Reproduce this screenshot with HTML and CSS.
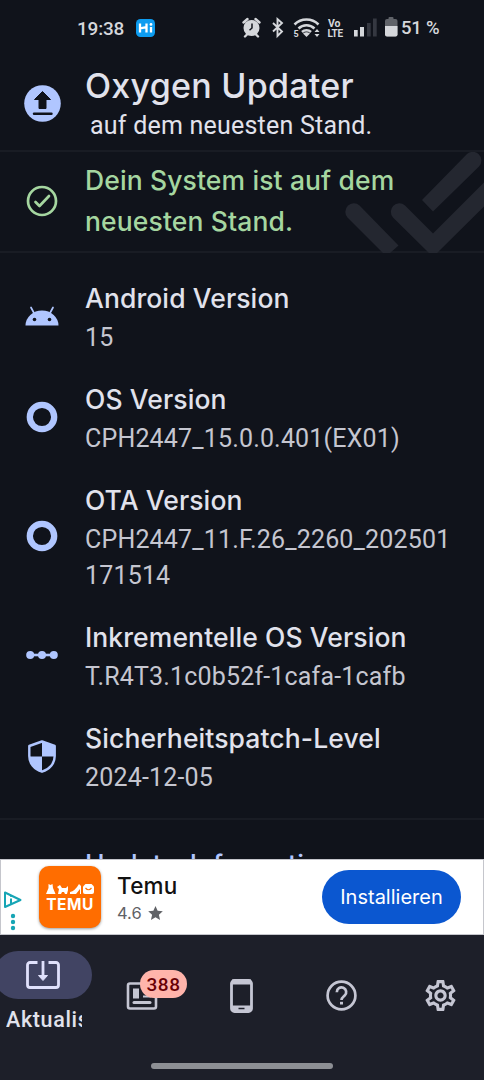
FILE: index.html
```html
<!DOCTYPE html>
<html lang="de">
<head>
<meta charset="utf-8">
<title>Oxygen Updater</title>
<link rel="stylesheet" href="styles.css">
</head>
<body>
<div class="screen">
  <div class="status">
    <span class="clock">19:38</span>
    <span class="hi"><svg width="19" height="18" viewBox="0 0 19 18"><rect width="19" height="18" rx="4.5" fill="#0d9cf0"/><path d="M4 4.5v9M10.500 4.500v9M4 9.300L10.500 8.200M15 8v5.500" stroke="#fff" stroke-width="2.300" fill="none"/><circle cx="15" cy="5.400" r="1.400" fill="#fff"/></svg></span>
    <svg class="sys" width="156" height="24" viewBox="242 16 156 24" fill="#d5d7db">
      <circle cx="251.500" cy="28" r="8"/><path d="M243.500 22.500l4-3.500M259.500 22.500l-4-3.500M247 34.500l-2 2M256 34.500l2 2" stroke="#d5d7db" stroke-width="2.400" stroke-linecap="round"/><path d="M252 23.500v4.500l-2.500 2.200" stroke="#10131b" stroke-width="1.500" fill="none"/>
      <path d="M273 23l9 8.500-4.500 4.500V19l4.500 4-9 8.500" fill="none" stroke="#d5d7db" stroke-width="1.900"/>
      <path d="M294.500 24.500a17 17 0 0 1 24 0M298.500 28.500a11.500 11.500 0 0 1 16 0M302 32a6.500 6.500 0 0 1 9 0" fill="none" stroke="#d5d7db" stroke-width="2.500"/><path d="M303 33.500q3.500-2.500 7 0l-3.500 3.500z"/><path d="M314.500 32l2.500-3 2.500 3zM314.500 34l2.500 3 2.500-3z"/>
      <text x="293.500" y="37" class="tiny">5</text>
      <text x="328" y="26.500" class="volte">Vo</text><text x="327.500" y="36.800" class="volte lte">LTE</text>
      <rect x="354" y="30" width="3.700" height="6.500"/><rect x="360" y="27" width="4" height="9.500"/><path d="M367 23h3.700v13.500H367zM373 18.500h3.700v18H373z" fill="#353841"/>
      <rect x="385" y="19" width="12.500" height="17.500" rx="2" fill="#606369"/><rect x="388.500" y="17" width="5" height="3" rx="1" fill="#606369"/><path d="M385 26h12.500v8.500a2 2 0 0 1-2 2H387a2 2 0 0 1-2-2z"/>
    </svg>
    <span class="battery">51 %</span>
  </div>

  <header class="row app">
    <svg width="37" height="37" viewBox="0 0 37 37"><circle cx="18.500" cy="18.500" r="18.300" fill="#b0c6ff"/><path d="M18.500 6.500L26.500 14.500h-4.500v9h-7v-9H10.500z" fill="#10131b" stroke="#10131b" stroke-width="1" stroke-linejoin="round"/><path d="M10 28.800h17.500" stroke="#10131b" stroke-width="2.400" stroke-linecap="round"/></svg>
    <div><h1>Oxygen Updater</h1><p class="tagline">auf dem neuesten Stand.</p></div>
  </header>

  <section class="row notice">
    <svg width="32" height="32" viewBox="0 0 32 32" fill="none" stroke="#a5d6a0" stroke-width="2.700"><circle cx="16" cy="16" r="14"/><path d="M9.500 17l4 4L23 11" stroke-linecap="round" stroke-linejoin="round"/></svg>
    <h2 class="green">Dein System ist auf dem<br>neuesten Stand.</h2>
    <svg class="watermark" width="142" height="101" viewBox="342 152 142 101" fill="#242730"><path d="M422 200l44.500-45.500a8.500 8.500 0 0 1 12.500 12L433 211.500z"/><path d="M347.500 217.500a8.500 8.500 0 0 1 12-12l39 40-9 8h-6z"/><path d="M393 217.500a8.500 8.500 0 0 1 12-12l28 28 51-51v24L437 253h-8z"/></svg>
  </section>

  <main class="list">
    <div class="row">
      <svg width="34" height="20" viewBox="0 0 34 20"><path d="M.5 19.500a16.500 15 0 0 1 33 0z" fill="#b0c6ff"/><path d="M9 7L6 1.500M25 7l3-5.500" stroke="#b0c6ff" stroke-width="1.700" stroke-linecap="round"/><circle cx="9.500" cy="13.500" r="1.800" fill="#10131b"/><circle cx="24.500" cy="13.500" r="1.800" fill="#10131b"/></svg>
      <div><h2>Android Version</h2><p>15</p></div>
    </div>
    <div class="row">
      <svg width="32" height="32" viewBox="0 0 32 32"><circle cx="16" cy="16" r="12.200" fill="none" stroke="#b0c6ff" stroke-width="6.300"/></svg>
      <div><h2>OS Version</h2><p>CPH2447_15.0.0.401(EX01)</p></div>
    </div>
    <div class="row">
      <svg width="32" height="32" viewBox="0 0 32 32"><circle cx="16" cy="16" r="12.200" fill="none" stroke="#b0c6ff" stroke-width="6.300"/></svg>
      <div><h2>OTA Version</h2><p>CPH2447_11.F.26_2260_202501<br>171514</p></div>
    </div>
    <div class="row">
      <svg width="32" height="8" viewBox="0 0 32 8" fill="#b0c6ff"><path d="M4 2.700h24v2.600H4z"/><circle cx="4.200" cy="4" r="4"/><circle cx="16" cy="4" r="4"/><circle cx="27.800" cy="4" r="4"/></svg>
      <div><h2>Inkrementelle OS Version</h2><p>T.R4T3.1c0b52f-1cafa-1cafb</p></div>
    </div>
    <div class="row">
      <svg width="28" height="33" viewBox="0 0 28 33"><path d="M14 1.500L26.700 6v10c0 7.500-5 13.500-12.700 15.700C6.300 29.500 1.300 23.500 1.300 16V6z" fill="#10131b" stroke="#b0c6ff" stroke-width="2.400" stroke-linejoin="round"/><path d="M14 1.500L26.700 6v10.500H14zM1.300 16.500H14v15.200C6.300 29.500 1.300 23.500 1.300 16.500z" fill="#b0c6ff"/></svg>
      <div><h2>Sicherheitspatch-Level</h2><p>2024-12-05</p></div>
    </div>
  </main>

  <section class="more"><h2>Update-Informationen</h2></section>

  <aside class="ad">
    <svg class="choices" width="20" height="42" viewBox="0 0 20 42"><path d="M2 3.500v14.500L17.500 11z" fill="none" stroke="#16a5b5" stroke-width="2" stroke-linejoin="round"/><path d="M8 9.500v5.500" stroke="#16a5b5" stroke-width="2"/><circle cx="8" cy="7" r="1.100" fill="#16a5b5"/><g fill="#16a5b5"><circle cx="10" cy="27" r="2.200"/><circle cx="10" cy="33" r="2.200"/><circle cx="10" cy="39" r="2.200"/></g></svg>
    <div class="temu">
      <svg width="48" height="11" viewBox="0 0 48 11" fill="#fff"><path d="M2.500 0l2 1 2-1 .5 4 2.500 6H0l2.500-6z"/><path d="M11 3l3-2 2 3h4l2-2v4l-1 4h-2l-1-2h-2l-1 2h-3l1-5z"/><path d="M24 8q5-1 9-8l2 2v8h-1V5l-4 5h-6z"/><path d="M37 2.500L39.500 0h6L48 2.500V8a2 2 0 0 1-2 2h-7a2 2 0 0 1-2-2z"/><path d="M39.500 4q3 3.500 6 0" fill="none" stroke="#ff6d00" stroke-width="1.200"/></svg>
      <span>TEMU</span>
    </div>
    <div class="adtext"><b>Temu</b><span class="rating">4.6 <svg width="15" height="14" viewBox="0 0 24 23"><path d="M12 0l3.500 8 8.500.8-6.400 5.700L19.500 23 12 18.500 4.500 23l1.900-8.500L0 8.800 8.500 8z" fill="#606266"/></svg></span></div>
    <span class="install">Installieren</span>
  </aside>

  <nav class="nav">
    <div class="tab active">
      <span class="pill"><svg width="34" height="28" viewBox="0 0 34 28" fill="none" stroke="#e0e1fc" stroke-width="2.800" stroke-linejoin="round"><path d="M11.500 1.500H4a2.500 2.500 0 0 0-2.500 2.500v20A2.500 2.500 0 0 0 4 26.500h26a2.500 2.500 0 0 0 2.500-2.500V4A2.500 2.500 0 0 0 30 1.500h-7.500M17 0v17"/><path d="M12.500 14.500h9L17 19.500z" fill="#e0e1fc" stroke-width="1"/></svg></span>
      <span class="label">Aktualisieren</span>
    </div>
    <div class="tab"><svg width="32" height="28" viewBox="0 0 32 28" fill="none" stroke="#c5c6d3" stroke-width="2.600"><rect x="2" y="1.500" width="28" height="25" rx="2"/><path d="M8 20.500h16" stroke-width="3" stroke-linecap="round"/><path d="M8 7.500h4v8H8zM17 9h8M17 14.500h8" fill="#c5c6d3" stroke-width="2"/></svg><span class="badge">388</span></div>
    <div class="tab"><svg width="23" height="34" viewBox="0 0 23 34"><rect x="1.500" y="1.500" width="20" height="31" rx="3" fill="none" stroke="#c5c6d3" stroke-width="2.800"/><path d="M2 3h19M2 29h19" stroke="#c5c6d3" stroke-width="5"/><path d="M8.500 29.500h6" stroke="#1d1f29" stroke-width="1.500"/></svg></div>
    <div class="tab"><svg width="31" height="31" viewBox="0 0 31 31" fill="none" stroke="#c5c6d3" stroke-width="2.700"><circle cx="15.500" cy="15.500" r="13.900"/><path d="M10.800 12.200a4.700 4.700 0 1 1 7.900 3.300c-1.900 1.700-3.200 2.400-3.200 4.600"/><path d="M14 21.800h3v2.700h-3z" fill="#c5c6d3" stroke="none"/></svg></div>
    <div class="tab"><svg width="37" height="37" viewBox="0 0 24 24" fill="#c5c6d3"><path d="M19.430 12.980c.04-.32.070-.64.070-.98s-.03-.66-.07-.98l2.110-1.650c.19-.15.240-.42.120-.64l-2-3.460c-.09-.16-.26-.25-.44-.25-.06 0-.12.010-.17.030l-2.490 1c-.52-.4-1.080-.73-1.690-.98l-.38-2.650C14.460 2.180 14.250 2 14 2h-4c-.25 0-.46.180-.49.420l-.38 2.650c-.61.250-1.170.590-1.690.98l-2.490-1c-.06-.02-.12-.03-.18-.03-.17 0-.34.090-.43.250l-2 3.460c-.13.220-.07.490.120.640l2.110 1.650c-.04.320-.07.650-.07.980s.030.660.070.980l-2.110 1.650c-.19.150-.24.420-.12.640l2 3.460c.09.160.260.250.440.250.06 0 .12-.01.170-.03l2.490-1c.52.400 1.080.730 1.690.980l.38 2.650c.03.240.240.420.490.420h4c.25 0 .46-.18.490-.42l.38-2.650c.61-.25 1.170-.59 1.690-.98l2.490 1c.06.020.12.030.18.030.17 0 .34-.09.430-.25l2-3.460c.12-.22.070-.49-.12-.64l-2.110-1.650zm-1.980-1.710c.04.310.050.520.050.730s-.02.430-.05.730l-.14 1.130.89.700 1.080.840-.7 1.210-1.270-.51-1.040-.42-.9.680c-.43.320-.84.560-1.250.730l-1.060.43-.16 1.130-.2 1.350h-1.400l-.19-1.350-.16-1.130-1.060-.43c-.43-.18-.83-.41-1.230-.71l-.91-.7-1.060.43-1.270.51-.7-1.210 1.080-.84.890-.7-.14-1.130c-.03-.31-.05-.54-.05-.74s.020-.43.050-.73l.14-1.130-.89-.7-1.080-.84.700-1.210 1.270.51 1.040.42.900-.68c.43-.32.840-.56 1.250-.73l1.060-.43.160-1.130.2-1.350h1.390l.19 1.350.16 1.130 1.060.43c.43.180.830.410 1.230.710l.91.700 1.060-.43 1.270-.51.7 1.210-1.070.85-.89.700.14 1.130zM12 8c-2.210 0-4 1.790-4 4s1.790 4 4 4 4-1.790 4-4-1.790-4-4-4zm0 6c-1.100 0-2-.9-2-2s.9-2 2-2 2 .9 2 2-.9 2-2 2z"/></svg></div>
    <span class="handle"></span>
  </nav>
</div>
</body>
</html>
```
FILE: styles.css
```css
* { box-sizing: border-box; }
body { margin: 0; background: #10131b; font-family: Roboto, sans-serif; }
h1, h2, p { margin: 0; white-space: nowrap; }
svg { flex: none; display: block; }
.screen { width: 484px; height: 1080px; display: flex; flex-direction: column; overflow: hidden; background: #10131b; }

.status { height: 56px; flex: none; display: flex; align-items: center; padding-left: 77px; color: #d5d7db; font-weight: 500; font-size: 19px; }
.clock { width: 59px; letter-spacing: -0.2px; }
.hi { width: 106px; }
.battery { margin-left: 3px; letter-spacing: -0.2px; font-size: 18.500px; }
.tiny { font: 700 9px Roboto, sans-serif; }
.volte { font: 700 10.500px Roboto, sans-serif; }
.lte { font-size: 10px; letter-spacing: -0.300px; }

.row { display: grid; grid-template-columns: 84px 1fr; column-gap: 1px; align-items: center; padding: 12px 0; }
.row > svg { justify-self: center; }
h2 { font: 500 26.500px/41px Inter, sans-serif; color: #e1e2ec; letter-spacing: 0.100px; }
p { font-size: 25px; line-height: 36px; letter-spacing: 0.170px; color: #c5c6d0; }

.app { height: 96px; flex: none; padding: 6px 0 4px; border-bottom: 2px solid #191c24; }
.app > svg { margin-top: -2px; }
h1 { font: 500 34px/43px Inter, sans-serif; color: #e1e2ec; letter-spacing: 0.250px; }
.app .tagline { padding: 1px 0 0 5px; color: #e1e2ec; letter-spacing: 0.220px; }

.notice { height: 101px; flex: none; padding: 0 0 2px; position: relative; border-bottom: 2px solid #191c24; }
.notice .green { color: #a5d6a0; position: relative; z-index: 1; letter-spacing: 0.120px; }
.watermark { position: absolute; right: 0; top: 0; }

.list { height: 567px; padding: 13px 0 0; border-bottom: 2px solid #191c24; flex: none; }
.list .row { padding-bottom: 11px; }
.list .row > svg { margin-top: -2px; }
.list .row > div { padding-top: 0; }
.list p:first-of-type { padding-top: 1px; }
.more { height: 39px; flex: none; overflow: hidden; padding: 24px 0 0 85px; }
.more h2 { color: #b0c6ff; }

.ad { height: 76px; flex: none; display: flex; align-items: center; background: #fff; border: 1px solid #c5c6cc; padding: 0 22px 0 2px; }
.choices { align-self: flex-end; margin-bottom: 3px; }
.temu { width: 62px; height: 62px; margin-left: 16px; border-radius: 10px; background: #ff6d00; box-shadow: 0 1px 3px #0006; display: flex; flex-direction: column; align-items: center; padding-top: 18px; color: #fff; }
.temu span { font: 700 15.500px/19px Inter, sans-serif; letter-spacing: 0.500px; }
.adtext { margin-left: 16px; display: flex; flex-direction: column; padding-top: 3px; }
.adtext b { font: 500 22.500px/29px Inter, sans-serif; color: #111; letter-spacing: 0.200px; }
.rating { display: flex; align-items: center; gap: 6px; font: 400 16.500px/26px Inter, sans-serif; color: #606266; }
.install { margin-left: auto; width: 139px; height: 54px; border-radius: 27px; background: #0b57d0; color: #fff; font: 400 20px/54px Inter, sans-serif; text-align: center; }

.nav { flex: 1; background: #1d1f29; position: relative; display: grid; grid-template-columns: 92px 99px 101px 98px 100px; }
.tab { height: 121px; display: flex; align-items: center; justify-content: center; position: relative; }
.active { flex-direction: column; justify-content: flex-start; padding-top: 16px; }
.pill { width: 98px; height: 48px; margin-left: -6px; border-radius: 24px; background: #414463; display: flex; align-items: center; justify-content: center; }
.label { width: 76px; margin: 7px 0 0 -4px; overflow: hidden; font-size: 21.500px; line-height: 27px; font-weight: 500; letter-spacing: 0.650px; color: #e1e2ec; }
.badge { position: absolute; left: 48px; top: 35px; width: 47px; height: 28px; border-radius: 14px; background: #ffb4ab; color: #690005; font: 500 19px/29px Roboto, sans-serif; letter-spacing: 0.500px; text-align: center; }
.handle { position: absolute; left: 151px; bottom: 11px; width: 182px; height: 6px; border-radius: 3px; background: #8d8f94; }
```
